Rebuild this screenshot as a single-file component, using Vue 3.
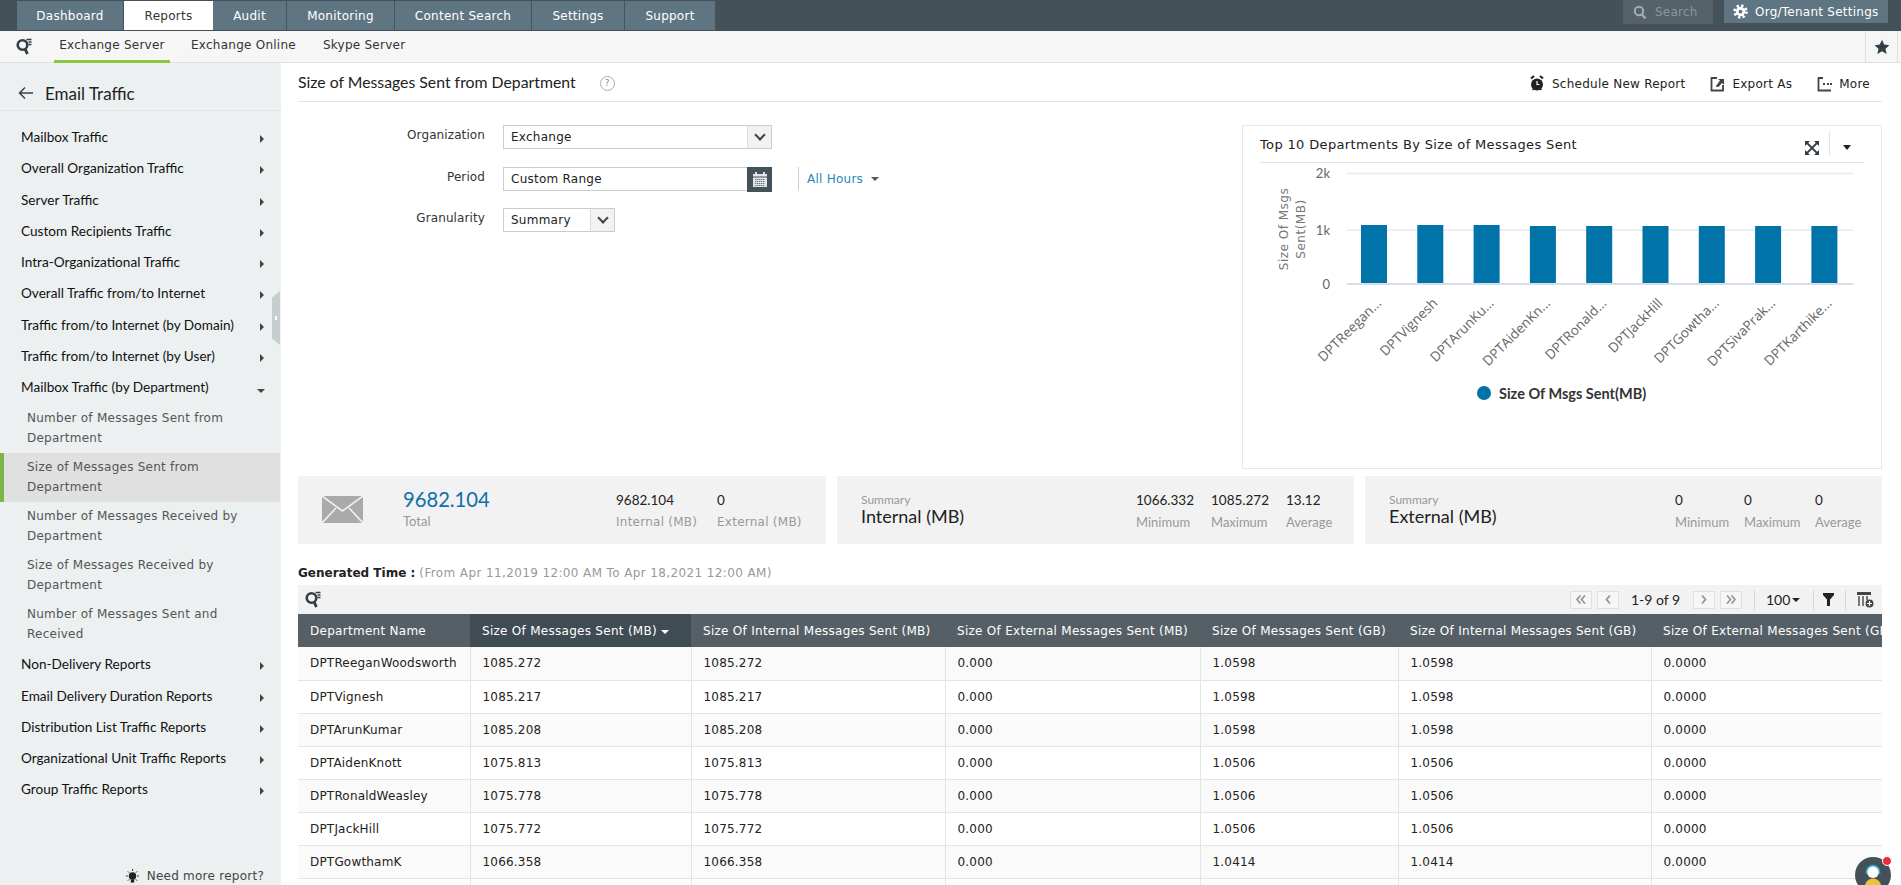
<script setup>
const tabs = ['Dashboard', 'Reports', 'Audit', 'Monitoring', 'Content Search', 'Settings', 'Support']
const groupsA = ['Mailbox Traffic', 'Overall Organization Traffic', 'Server Traffic', 'Custom Recipients Traffic', 'Intra-Organizational Traffic', 'Overall Traffic from/to Internet', 'Traffic from/to Internet (by Domain)', 'Traffic from/to Internet (by User)']
const groupsB = ['Non-Delivery Reports', 'Email Delivery Duration Reports', 'Distribution List Traffic Reports', 'Organizational Unit Traffic Reports', 'Group Traffic Reports']
const subs = ['Number of Messages Sent from Department', 'Size of Messages Sent from Department', 'Number of Messages Received by Department', 'Size of Messages Received by Department', 'Number of Messages Sent and Received']
const bars = [
  { label: 'DPTReegan...', top: 225 }, { label: 'DPTVignesh', top: 225 }, { label: 'DPTArunKu...', top: 225 },
  { label: 'DPTAidenKn...', top: 226 }, { label: 'DPTRonald...', top: 226 }, { label: 'DPTJackHill', top: 226 },
  { label: 'DPTGowtha...', top: 226 }, { label: 'DPTSivaPrak...', top: 226 }, { label: 'DPTKarthike...', top: 226 }
].map((b, i) => ({ ...b, x: 1361 + i * 56.3 }))
const headers = ['Department Name', 'Size Of Messages Sent (MB)', 'Size Of Internal Messages Sent (MB)', 'Size Of External Messages Sent (MB)', 'Size Of Messages Sent (GB)', 'Size Of Internal Messages Sent (GB)', 'Size Of External Messages Sent (GB)']
const rows = [
  ['DPTReeganWoodsworth', '1085.272', '1085.272', '0.000', '1.0598', '1.0598', '0.0000'],
  ['DPTVignesh', '1085.217', '1085.217', '0.000', '1.0598', '1.0598', '0.0000'],
  ['DPTArunKumar', '1085.208', '1085.208', '0.000', '1.0598', '1.0598', '0.0000'],
  ['DPTAidenKnott', '1075.813', '1075.813', '0.000', '1.0506', '1.0506', '0.0000'],
  ['DPTRonaldWeasley', '1075.778', '1075.778', '0.000', '1.0506', '1.0506', '0.0000'],
  ['DPTJackHill', '1075.772', '1075.772', '0.000', '1.0506', '1.0506', '0.0000'],
  ['DPTGowthamK', '1066.358', '1066.358', '0.000', '1.0414', '1.0414', '0.0000'],
  ['', '', '', '', '', '', '']
]
</script>

<template>
  <div class="app">
    <header class="topbar">
      <nav class="tabs">
        <a v-for="t in tabs" :key="t" class="tab" :class="{ active: t === 'Reports' }">{{ t }}</a>
      </nav>
      <div class="top-right">
        <div class="search">
          <svg width="14" height="15" viewBox="0 0 14 15"><circle cx="6" cy="6" r="4.2" fill="none" stroke="#a3adb2" stroke-width="2"/><path d="M9 9.500l3.500 4" stroke="#a3adb2" stroke-width="2.200"/></svg>
          <span>Search</span>
        </div>
        <div class="org">
          <svg width="15" height="15" viewBox="0 0 16 16"><circle cx="8" cy="8" r="6" fill="none" stroke="#fff" stroke-width="3.400" stroke-dasharray="2.400 2.310"/><circle cx="8" cy="8" r="5" fill="#fff"/><circle cx="8" cy="8" r="2" fill="#5f7582"/></svg>
          <span>Org/Tenant Settings</span>
        </div>
      </div>
    </header>

    <div class="subbar">
      <svg class="qs" width="16" height="17" viewBox="0 0 16 17"><circle cx="6.500" cy="7" r="4.800" fill="none" stroke="#333f46" stroke-width="2.600"/><path d="M9 11l2.500 5" stroke="#333f46" stroke-width="2.800"/><path d="M10.500 1.500h5M12.500 4h3M12.500 6.500h3" stroke="#333f46" stroke-width="1.300"/></svg>
      <a class="sub-tab on">Exchange Server</a>
      <a class="sub-tab online">Exchange Online</a>
      <a class="sub-tab skype">Skype Server</a>
      <div class="star">
        <svg width="16" height="16" viewBox="0 0 16 16"><path d="M8 .8l2.200 4.800 5.200.6-3.900 3.500 1.100 5.200L8 12.300l-4.600 2.600 1.100-5.200L.6 6.200l5.200-.6z" fill="#333f46"/></svg>
      </div>
    </div>

    <div class="body">
      <aside class="sidebar">
        <div class="side-head">
          <svg width="16" height="14" viewBox="0 0 16 14"><path d="M15 7H2M7 1.500L1.500 7 7 12.500" fill="none" stroke="#37444c" stroke-width="1.500"/></svg>
          <span>Email Traffic</span>
        </div>
        <ul class="groups">
          <li v-for="g in groupsA" :key="g" class="group"><span>{{ g }}</span><i class="tri"></i></li>
          <li class="group"><span>Mailbox Traffic (by Department)</span><i class="tri-down"></i></li>
        </ul>
        <ul class="subs">
          <li v-for="s in subs" :key="s" class="sub" :class="{ sel: s === subs[1] }">{{ s }}</li>
        </ul>
        <ul class="groups">
          <li v-for="g in groupsB" :key="g" class="group"><span>{{ g }}</span><i class="tri"></i></li>
        </ul>
        <div class="need">
          <svg width="15" height="15" viewBox="0 0 16 16"><circle cx="8" cy="7.500" r="4" fill="#222"/><rect x="6.200" y="11" width="3.600" height="3.500" fill="#222"/><path d="M8 0v2M1 7.500h2M13 7.500h2M3 2.500l1.400 1.400M13 2.500l-1.400 1.400M3 12.500l1.400-1.400M13 12.500l-1.400-1.400" stroke="#222" stroke-width="1"/></svg>
          <span>Need more report?</span>
        </div>
        <div class="handle"><i></i></div>
      </aside>

      <main class="main">
        <div class="page-head">
          <h1>Size of Messages Sent from Department</h1>
          <span class="help">?</span>
          <div class="actions">
            <a class="act">
              <svg width="16" height="17" viewBox="0 0 16 17"><circle cx="8" cy="9.500" r="6" fill="#222"/><path d="M2 3.500l3-2.500M14 3.500L11 1" stroke="#222" stroke-width="2.200"/><path d="M8 6v3.500h2.500" fill="none" stroke="#fff" stroke-width="1.200"/><path d="M3.500 15l1.500-1.500M12.500 15L11 13.500" stroke="#222" stroke-width="1.500"/></svg>
              <span>Schedule New Report</span>
            </a>
            <a class="act export">
              <svg width="15" height="16" viewBox="0 0 15 16"><path d="M7 2H1.500v12.500H13V9" fill="none" stroke="#444" stroke-width="1.800"/><path d="M5.500 10.500L10 4.500 8 3h6v5.500L12 7l-3.500 4z" fill="#444"/></svg>
              <span>Export As</span>
            </a>
            <a class="act more">
              <svg width="15" height="16" viewBox="0 0 15 16"><path d="M1.500 1.500v13H14" fill="none" stroke="#444" stroke-width="1.800"/><path d="M1 2h5M6 8h2M10 8h2M13 8h2" stroke="#444" stroke-width="2"/></svg>
              <span>More</span>
            </a>
          </div>
        </div>

        <div class="top-row">
          <form class="filters" @submit.prevent>
            <div class="frow r1">
              <label>Organization</label>
              <div class="select wide"><span>Exchange</span><b class="drop"><i></i></b></div>
            </div>
            <div class="frow r2">
              <label>Period</label>
              <div class="date">
                <span>Custom Range</span>
                <b class="cal">
                  <svg width="16" height="17" viewBox="0 0 16 17"><path d="M1 3h14v13H1z" fill="#e3e6e8"/><path d="M4 1v4M12 1v4" stroke="#e3e6e8" stroke-width="2"/><path d="M1 6h14" stroke="#455158" stroke-width="1"/><path d="M3 8.500h10M3 10.500h10M3 12.500h10M3 14.500h10" stroke="#6b767c" stroke-width="1" stroke-dasharray="1.400 .6"/></svg>
                </b>
              </div>
              <div class="hours"><span>All Hours</span><i></i></div>
            </div>
            <div class="frow r3">
              <label>Granularity</label>
              <div class="select narrow"><span>Summary</span><b class="drop"><i></i></b></div>
            </div>
          </form>

          <section class="chart">
            <div class="chart-head">
              <span>Top 10 Departments By Size of Messages Sent</span>
              <svg class="expand" width="14" height="14" viewBox="0 0 14 14"><path d="M0 0h5L0 5zM14 0v5L9 0zM0 14V9l5 5zM14 14H9l5-5z" fill="#333f46"/><path d="M2 2l10 10M12 2L2 12" stroke="#333f46" stroke-width="1.800"/></svg>
              <i class="vr"></i>
              <i class="chart-caret"></i>
            </div>
            <svg class="plot" width="638" height="305" viewBox="1243 163 638 305">
              <path d="M1347 173.500H1853M1347 230H1853" stroke="#efefef" stroke-width="2"/>
              <path d="M1347 284H1853" stroke="#d5deea" stroke-width="2"/>
              <text class="tick" x="1330" y="178" text-anchor="end">2k</text>
              <text class="tick" x="1330" y="235" text-anchor="end">1k</text>
              <text class="tick" x="1330" y="289" text-anchor="end">0</text>
              <text class="ytitle" transform="translate(1288 229) rotate(-90)" text-anchor="middle">Size Of Msgs</text>
              <text class="ytitle" transform="translate(1305 229) rotate(-90)" text-anchor="middle">Sent(MB)</text>
              <rect v-for="b in bars" :key="b.label" :x="b.x" :y="b.top" width="26" :height="283 - b.top" fill="#0073a8"/>
              <text v-for="b in bars" :key="b.label + 't'" class="xlab" text-anchor="end" :transform="`translate(${b.x + 21} 304) rotate(-45)`">{{ b.label }}</text>
              <circle cx="1484" cy="393" r="7" fill="#0073a8"/>
              <text class="legend" x="1499" y="399">Size Of Msgs Sent(MB)</text>
            </svg>
          </section>
        </div>

        <div class="cards">
          <div class="card c1">
            <svg class="env" width="41" height="27" viewBox="0 0 41 27"><rect width="41" height="27" fill="#aaa"/><path d="M0 0l20.500 15L41 0M0 27l14-15M41 27L27 12" fill="none" stroke="#f2f2f2" stroke-width="1.600"/></svg>
            <div class="total"><div class="big">9682.104</div><div class="lab">Total</div></div>
            <div class="stat in"><div class="val">9682.104</div><div class="lab wide-lab">Internal (MB)</div></div>
            <div class="stat"><div class="val">0</div><div class="lab wide-lab">External (MB)</div></div>
          </div>
          <div class="card c2">
            <div class="sum"><div class="sm">Summary</div><div class="name">Internal (MB)</div></div>
            <div class="stats s2">
              <div><div class="val">1066.332</div><div class="lab">Minimum</div></div>
              <div><div class="val">1085.272</div><div class="lab">Maximum</div></div>
              <div><div class="val">13.12</div><div class="lab">Average</div></div>
            </div>
          </div>
          <div class="card c3">
            <div class="sum"><div class="sm">Summary</div><div class="name">External (MB)</div></div>
            <div class="stats s3">
              <div><div class="val">0</div><div class="lab">Minimum</div></div>
              <div><div class="val">0</div><div class="lab">Maximum</div></div>
              <div><div class="val">0</div><div class="lab">Average</div></div>
            </div>
          </div>
        </div>

        <div class="generated"><b>Generated Time :</b> <span>(From Apr 11,2019 12:00 AM To Apr 18,2021 12:00 AM)</span></div>

        <div class="toolbar">
          <svg width="16" height="17" viewBox="0 0 16 17"><circle cx="6.500" cy="7" r="4.800" fill="none" stroke="#333f46" stroke-width="2.600"/><path d="M9 11l2.500 5" stroke="#333f46" stroke-width="2.800"/><path d="M10.500 1.500h5M12.500 4h3M12.500 6.500h3" stroke="#333f46" stroke-width="1.300"/></svg>
          <div class="pager">
            <span class="pg"><svg width="10" height="9" viewBox="0 0 10 9"><path d="M4.500 .5L1 4.500l3.500 4M9 .5L5.500 4.500 9 8.500" fill="none" stroke="#999" stroke-width="1.800"/></svg></span>
            <span class="pg p2"><svg width="6" height="9" viewBox="0 0 6 9"><path d="M5 .5L1.500 4.500 5 8.500" fill="none" stroke="#999" stroke-width="1.800"/></svg></span>
            <span class="count">1-9 of 9</span>
            <span class="pg"><svg width="6" height="9" viewBox="0 0 6 9"><path d="M1 .5l3.500 4-3.500 4" fill="none" stroke="#999" stroke-width="1.800"/></svg></span>
            <span class="pg p2"><svg width="10" height="9" viewBox="0 0 10 9"><path d="M1 .5l3.500 4-3.500 4M5.500 .5L9 4.500l-3.500 4" fill="none" stroke="#999" stroke-width="1.800"/></svg></span>
            <i class="sep s-a"></i>
            <span class="perpage">100</span><i class="pcaret"></i>
            <i class="sep s-b"></i>
            <svg class="ficon" width="11" height="13" viewBox="0 0 11 13"><path d="M0 0h11v2L7 6.500V13H4V6.500L0 2z" fill="#222"/></svg>
            <i class="sep s-c"></i>
            <svg class="cicon" width="17" height="17" viewBox="0 0 17 17"><path d="M0 1h14v3H0z" fill="#444"/><path d="M1 5v10h2V5zM5 5v10h2V5zM9 5v4h2V5z" fill="#777"/><circle cx="12.500" cy="12.500" r="4" fill="#444"/><path d="M10 12.500h5M12.500 10v5" stroke="#fff" stroke-width="1.200"/></svg>
          </div>
        </div>

        <div class="table-wrap">
          <table>
            <colgroup>
              <col class="w1"><col class="w2"><col class="w3"><col class="w4"><col class="w5"><col class="w6"><col class="w7">
            </colgroup>
            <thead>
              <tr>
                <th v-for="(h, i) in headers" :key="h" :class="{ sorted: i === 1 }">{{ h }}<i v-if="i === 1" class="sort"></i></th>
              </tr>
            </thead>
            <tbody>
              <tr v-for="(r, i) in rows" :key="i">
                <td v-for="(c, j) in r" :key="j">{{ c }}</td>
              </tr>
            </tbody>
          </table>
        </div>
      </main>
    </div>

    <div class="chat">
      <svg width="36" height="36" viewBox="0 0 36 36"><circle cx="18" cy="18" r="18" fill="#455158"/><circle cx="18" cy="15" r="6" fill="#fff"/><path d="M11.500 17v-2a6.500 6.500 0 0 1 13 0v2" fill="none" stroke="#2eb0d0" stroke-width="1.500"/><ellipse cx="18" cy="29" rx="8" ry="7.500" fill="#eac23c"/></svg>
      <i></i>
    </div>
  </div>
</template>

<style>
html, body { margin: 0; overflow: hidden; background: #fff; }
</style>

<style scoped>
.app { position: relative; width: 1901px; height: 885px; overflow: hidden; font: 12px/18px "DejaVu Sans", sans-serif; letter-spacing: .25px; color: #222; background: #fff; }
.topbar { height: 31px; background: #455158; display: flex; justify-content: space-between; box-sizing: border-box; padding-left: 17px; }
.tabs { display: grid; grid-template-columns: 107px 89px 74px 108px 137px 93px 91px; margin-top: 1px; height: 29px; }
.tab { background: #5f7582; color: #fff; display: flex; align-items: center; justify-content: center; border-right: 1px solid #46545c; box-sizing: border-box; }
.tab.active { background: #fff; color: #333; border-right: none; }
.top-right { display: flex; align-items: flex-start; padding-right: 13px; }
.search { width: 90px; height: 24px; background: #566269; color: #8b969c; display: flex; align-items: center; gap: 8px; padding-left: 10px; box-sizing: border-box; margin-right: 11px; }
.org { width: 164px; height: 23px; background: #5f7582; color: #fff; display: flex; align-items: center; gap: 7px; padding-left: 9px; box-sizing: border-box; }
.subbar { height: 32px; background: #f6f6f6; border-bottom: 1px solid #e0e0e0; box-sizing: border-box; display: flex; position: relative; }
.qs { margin: 7px 0 0 16px; }
.sub-tab { height: 32px; box-sizing: border-box; line-height: 29px; color: #333; }
.sub-tab.on { margin-left: 22px; width: 116px; text-align: center; border-bottom: 3px solid #8cc63f; }
.sub-tab.online { margin-left: 21px; }
.sub-tab.skype { margin-left: 27px; }
.star { position: absolute; right: 3px; top: 0; width: 33px; height: 31px; border-left: 1px solid #e0e0e0; border-right: 1px solid #e0e0e0; box-sizing: border-box; display: flex; align-items: center; justify-content: center; }
.body { display: flex; height: 822px; }
.sidebar { width: 281px; flex: none; background: #ecf0f1; display: flex; flex-direction: column; position: relative; box-sizing: border-box; }
.side-head { height: 48px; box-sizing: border-box; border-bottom: 1px solid #e0e3e4; display: flex; align-items: center; padding: 13px 0 0 18px; gap: 11px; font: 17px "Lato", sans-serif; letter-spacing: 0; color: #222; }
.groups { list-style: none; margin: 0; padding: 0; }
.groups:first-of-type { padding-top: 10.500px; }
.group { height: 31.250px; display: flex; align-items: center; justify-content: space-between; padding: 0 17px 0 21px; font: 13.600px "Lato", sans-serif; letter-spacing: 0; color: #111; }
.tri { width: 0; height: 0; border-left: 4px solid #444; border-top: 4px solid transparent; border-bottom: 4px solid transparent; position: relative; top: 2px; }
.tri-down { width: 0; height: 0; border-top: 4px solid #444; border-left: 4px solid transparent; border-right: 4px solid transparent; position: relative; top: 4px; right: -1px; }
.subs { list-style: none; margin: 1px 0 0; padding: 0; }
.sub { height: 49px; box-sizing: border-box; padding: 4.500px 40px 4.500px 27px; line-height: 20px; color: #555; }
.sub.sel { background: #e0e0e0; border-left: 4px solid #7ab648; padding-left: 23px; margin-right: 1px; }
.need { margin-top: auto; height: 18px; margin-bottom: 0; display: flex; align-items: center; justify-content: flex-end; padding-right: 17px; gap: 7px; color: #444; }
.handle { position: absolute; left: 272px; top: 228px; width: 8px; height: 54px; background: #c8cdcf; clip-path: polygon(100% 0, 100% 100%, 0 88%, 0 12%); }
.handle i { position: absolute; left: 3px; top: 25px; width: 2px; height: 4px; background: #fff; }
.main { flex: none; width: 1584px; margin-left: 17px; }
.page-head { height: 39px; box-sizing: border-box; padding-top: 3px; border-bottom: 1px solid #e4e4e4; display: flex; align-items: center; }
h1 { margin: 0; font: 400 15.800px "Lato", sans-serif; letter-spacing: 0; color: #222; position: relative; top: -2px; }
.help { margin-left: 24px; width: 13px; height: 13px; border: 1px solid #aaa; border-radius: 50%; font-size: 9px; line-height: 13px; text-align: center; color: #888; letter-spacing: 0; }
.actions { margin-left: auto; display: flex; padding-right: 12px; color: #222; }
.act { display: flex; align-items: center; gap: 7px; }
.export { margin-left: 25px; }
.more { margin-left: 25px; }
.top-row { display: flex; justify-content: space-between; margin-top: 23px; height: 344px; }
.filters { display: block; }
.frow { display: flex; align-items: flex-start; }
.frow label { width: 187px; text-align: right; margin-right: 18px; line-height: 20px; color: #333; letter-spacing: .1px; }
.r2 { margin-top: 18px; }
.r3 { margin-top: 17px; }
.select, .date { height: 24px; border: 1px solid #ccc; box-sizing: border-box; display: flex; align-items: center; justify-content: space-between; padding-left: 7px; background: #fff; }
.wide { width: 269px; }
.narrow { width: 112px; }
.drop { width: 24px; height: 22px; background: #f2f2f2; border-left: 1px solid #ddd; display: flex; align-items: center; justify-content: center; box-sizing: border-box; }
.drop i { width: 6px; height: 6px; border-right: 2px solid #444; border-bottom: 2px solid #444; transform: rotate(45deg); margin-top: -4px; }
.date { border-right: none; position: relative; width: 269px; }
.cal { position: absolute; right: 0; top: -1px; width: 25px; height: 25px; background: #455158; display: flex; align-items: center; justify-content: center; }
.hours { margin-left: 26px; height: 23px; border-left: 1px solid #ccc; padding-left: 8px; display: flex; align-items: center; gap: 8px; color: #1f87c0; }
.hours i { border-top: 4px solid #555; border-left: 4px solid transparent; border-right: 4px solid transparent; }
.chart { width: 640px; height: 344px; box-sizing: border-box; border: 1px solid #e8e8e8; }
.chart-head { margin: 0 17px; height: 36px; border-bottom: 1px solid #e4e4e4; display: flex; align-items: center; font-size: 13px; color: #222; position: relative; }
.chart-head span { position: relative; top: 1px; letter-spacing: .35px; }
.expand { position: absolute; left: 545px; top: 15px; }
.vr { position: absolute; left: 569px; top: 5px; height: 25px; border-left: 1px solid #e4e4e4; }
.chart-caret { position: absolute; left: 583px; top: 19px; border-top: 5px solid #222; border-left: 4.500px solid transparent; border-right: 4.500px solid transparent; }
.plot { display: block; }
.tick { font: 13px "Lato", sans-serif; letter-spacing: 0; fill: #666; }
.ytitle { font: 12px "DejaVu Sans", sans-serif; letter-spacing: .5px; fill: #777; }
.xlab { font: 13.500px "Open Sans", sans-serif; letter-spacing: 0; fill: #666; }
.legend { font: 700 14.500px "Lato", sans-serif; letter-spacing: 0; fill: #333; }
.cards { display: grid; grid-template-columns: 528px 517px 517px; gap: 11px; margin-top: 7px; height: 68px; }
.card { background: #f2f2f2; display: flex; box-sizing: border-box; font-family: "Lato", sans-serif; letter-spacing: 0; }
.c1 { padding: 0 0 0 24px; }
.env { margin-top: 20px; }
.total { margin-left: 40px; width: 213px; padding-top: 11px; }
.big { font-size: 20.200px; line-height: 24px; color: #0f6fa8; }
.lab { color: #999; font-size: 13px; line-height: 18px; margin-top: 3px; }
.wide-lab { font: 12px/18px "DejaVu Sans", sans-serif; letter-spacing: .25px; }
.total .lab { margin-top: 1px; }
.stat { padding-top: 15px; }
.stat .lab { margin-top: 4px; }
.stat.in { width: 101px; }
.val { font-size: 13.500px; line-height: 18px; color: #222; }
.c2, .c3 { justify-content: space-between; padding-left: 24px; }
.sum { padding-top: 17px; }
.sm { font-size: 12px; line-height: 14px; color: #999; }
.name { font-size: 18px; line-height: 22px; color: #222; margin-top: -2px; }
.stats { display: grid; padding-top: 15px; }
.stats .lab { margin-top: 4px; }
.s2 { grid-template-columns: 75px 75px 68px; }
.s3 { grid-template-columns: 69px 71px 67px; }
.generated { height: 41px; padding-top: 20px; box-sizing: border-box; }
.generated b { font: 700 12px "DejaVu Sans", sans-serif; letter-spacing: 0; }
.generated span { color: #999; letter-spacing: .38px; }
.toolbar { height: 29px; width: 1584px; background: #f2f2f2; display: flex; align-items: center; justify-content: space-between; padding: 0 8px 0 7px; box-sizing: border-box; }
.pager { display: flex; align-items: center; }
.pg { width: 22px; height: 18px; border: 1px solid #e0e0e0; background: #f6f6f6; box-sizing: border-box; display: flex; align-items: center; justify-content: center; }
.p2 { margin-left: 5px; }
.count { font: 14px "Lato", sans-serif; letter-spacing: 0; margin: 0 13px 0 12px; width: 49px; color: #222; white-space: nowrap; }
.sep { height: 20px; border-left: 1px solid #d8d8d8; }
.s-a { margin: 0 11px 0 12px; }
.perpage { font: 14px "Lato", sans-serif; letter-spacing: 0; width: 22px; }
.pcaret { margin-left: 4px; border-top: 4px solid #222; border-left: 4px solid transparent; border-right: 4px solid transparent; }
.s-b { margin: 0 9px 0 13px; }
.s-c { margin: 0 11px 0 11px; }
.table-wrap { width: 1584px; overflow: hidden; }
table { border-collapse: collapse; table-layout: fixed; width: 1600px; }
.w1 { width: 172px; } .w2 { width: 221px; } .w3 { width: 254px; } .w4 { width: 255px; } .w5 { width: 198px; } .w6 { width: 253px; } .w7 { width: 247px; }
th { height: 33px; padding: 0 0 0 12px; background: #565f66; color: #fff; font-weight: 400; text-align: left; white-space: nowrap; overflow: hidden; box-sizing: border-box; letter-spacing: .28px; }
th.sorted { background: #3f4c54; }
.sort { display: inline-block; margin-left: 4px; vertical-align: 1px; border-top: 4px solid #fff; border-left: 4px solid transparent; border-right: 4px solid transparent; }
td { height: 33px; padding: 0 0 0 12px; border-right: 1px solid #e4e4e4; border-bottom: 1px solid #e4e4e4; box-sizing: border-box; color: #222; letter-spacing: .19px; }
tbody tr:nth-child(odd) td { background: #fafafa; }
.chat { position: absolute; left: 1855px; top: 857px; width: 36px; height: 36px; }
.chat svg { display: block; }
.chat i { position: absolute; left: 27px; top: -1px; width: 8px; height: 8px; border-radius: 50%; background: #ee2c3c; border: 1px solid #fff; }
</style>
